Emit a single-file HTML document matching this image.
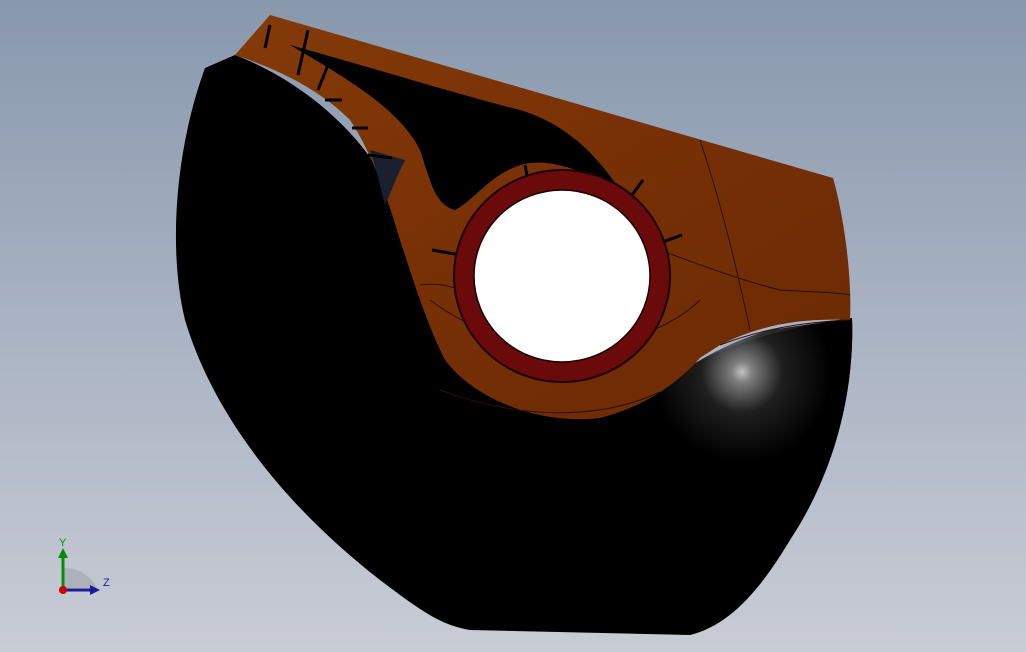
<!DOCTYPE html>
<html><head><meta charset="utf-8"><style>
html,body{margin:0;padding:0;width:1026px;height:652px;overflow:hidden}
body{background:linear-gradient(180deg,#8898ad 0%,#a9b3c3 50%,#c9ccd5 100%)}
svg{position:absolute;left:0;top:0}
</style></head><body>
<svg width="1026" height="652" viewBox="0 0 1026 652">
<defs>
<radialGradient id="hl" cx="742" cy="372" r="90" gradientUnits="userSpaceOnUse">
<stop offset="0" stop-color="#d8d8d8"/><stop offset="0.12" stop-color="#8a8a8a"/><stop offset="0.45" stop-color="#222"/><stop offset="1" stop-color="#000"/>
</radialGradient>
<linearGradient id="or" x1="0" y1="0" x2="1" y2="1">
<stop offset="0" stop-color="#843a08"/><stop offset="0.5" stop-color="#773006"/><stop offset="1" stop-color="#6a2a04"/>
</linearGradient>
</defs>
<path d="M205,68 L235,55 C300,80 360,130 390,190 C410,260 430,330 470,380 C520,420 600,425 660,390 C700,350 770,330 852,318 C855,400 830,480 790,540 C760,590 730,625 690,635 L470,630 C440,625 420,610 380,580 C290,510 215,420 185,320 C168,250 175,150 205,68 Z" fill="#000"/>
<path d="M600,420 C660,390 700,350 770,330 L852,318 C855,400 830,470 780,520 C720,560 650,500 600,420 Z" fill="url(#hl)" opacity="0.9"/>
<path d="M235,55 L270,15 L833,178 C845,220 852,280 850,320 C800,318 760,325 720,345 L700,358 C680,380 650,405 600,418 C540,425 475,400 445,360 C425,320 410,270 400,240 C385,190 370,150 350,120 C320,90 280,70 235,55 Z" fill="url(#or)"/>
<path d="M290,45 C380,70 460,95 520,110 C570,125 600,160 620,190 C590,175 560,160 530,163 C495,168 475,200 455,210 C435,205 430,180 420,150 C400,110 350,80 290,45 Z" fill="#000"/>
<path d="M370,150 L405,160 C395,180 390,195 385,205 C380,185 375,165 370,150 Z" fill="#1a2030"/>
<g stroke="#2a1000" stroke-width="1" fill="none">
<path d="M700,140 C720,200 735,260 750,330"/>
<path d="M660,250 C700,265 740,280 780,290 C810,292 835,292 850,295"/>
<path d="M430,300 C470,330 520,350 600,345 C640,340 680,320 700,300"/>
<path d="M420,285 C460,280 480,300 520,340"/>
<path d="M720,345 C760,330 800,322 850,320"/>
<path d="M440,390 C520,420 600,420 660,392"/>
</g>
<g stroke="#000" stroke-width="3">
<line x1="270" y1="25" x2="265" y2="48"/><line x1="308" y1="30" x2="298" y2="75"/>
<line x1="330" y1="60" x2="318" y2="90"/><line x1="325" y1="100" x2="342" y2="100"/>
<line x1="352" y1="128" x2="368" y2="128"/><line x1="368" y1="155" x2="392" y2="158"/>
<line x1="432" y1="250" x2="460" y2="255"/><line x1="525" y1="165" x2="528" y2="180"/>
<line x1="583" y1="165" x2="580" y2="180"/><line x1="643" y1="180" x2="632" y2="195"/>
<line x1="682" y1="235" x2="660" y2="243"/>
</g>
<ellipse cx="562" cy="276" rx="108" ry="106" fill="#6a0a0a" stroke="#1a0000" stroke-width="2"/>
<ellipse cx="562" cy="276" rx="88" ry="86" fill="#fff" stroke="#1a0000" stroke-width="1.5"/>
<path d="M63,588 L63,568 A36,36 0 0 1 97,588 Z" fill="#a8acb4" opacity="0.8"/>
<line x1="63" y1="590" x2="63" y2="555" stroke="#0a8a0a" stroke-width="3"/>
<path d="M58,558 L63,548 L68,558 Z" fill="#0a8a0a"/>
<line x1="63" y1="590" x2="92" y2="590" stroke="#1a1a9a" stroke-width="3"/>
<path d="M90,585 L100,590 L90,595 Z" fill="#1a1a9a"/>
<circle cx="63" cy="590" r="4" fill="#c00"/>
<text x="59" y="546" font-family="Liberation Sans,sans-serif" font-size="11" fill="#0a8a0a">Y</text>
<text x="103" y="586" font-family="Liberation Sans,sans-serif" font-size="11" fill="#1a1a9a">Z</text>
</svg>
</body></html>
